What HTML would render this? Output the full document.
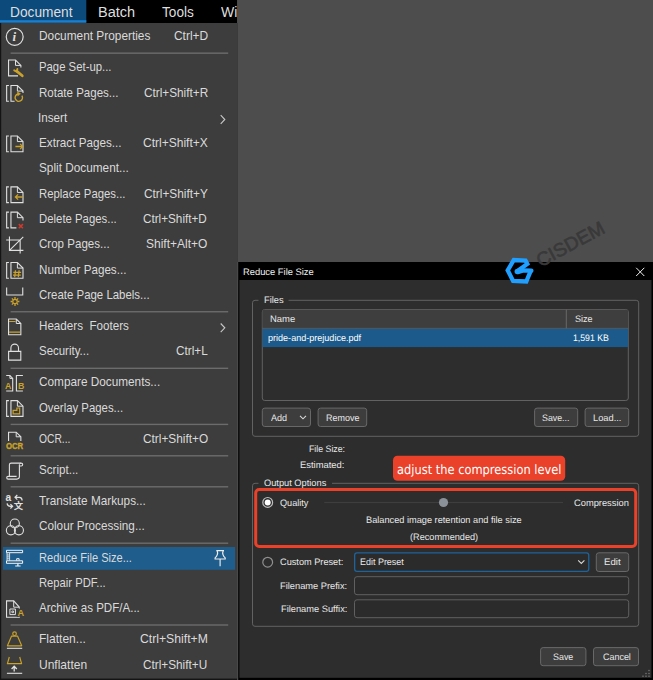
<!DOCTYPE html>
<html lang="en"><head><meta charset="utf-8"><title>Reduce File Size</title>
<style>
html,body{margin:0;padding:0}
body{width:653px;height:680px;overflow:hidden;position:relative;background:#4d4d4d;font-family:"Liberation Sans",sans-serif}
.b{position:absolute}
.t{position:absolute;white-space:pre;transform-origin:0 50%;display:block}
svg.ic{position:absolute;left:0;top:0}
</style></head><body>
<svg class="ic" width="653" height="680" viewBox="0 0 653 680">
<rect x="0.00" y="0.00" width="237.05" height="23.00" rx="0.00" fill="#000"/>
<rect x="0.00" y="0.00" width="86.30" height="22.60" rx="0.00" fill="#0c4a7b"/>
<rect x="0.00" y="20.20" width="86.30" height="2.50" rx="0.00" fill="#1a7fcf"/>
<rect x="0.00" y="23.00" width="237.30" height="657.00" rx="0.00" fill="#141414"/>
<rect x="1.20" y="23.00" width="236.10" height="655.60" rx="0.00" fill="#3d3d3d"/>
<rect x="237.30" y="262.00" width="0.90" height="418.00" rx="0.00" fill="#505050"/>
<rect x="10.60" y="52.45" width="217.60" height="1.40" rx="0.00" fill="#6c6c6c"/>
<rect x="10.60" y="311.05" width="217.60" height="1.40" rx="0.00" fill="#6c6c6c"/>
<rect x="10.60" y="367.60" width="217.60" height="1.40" rx="0.00" fill="#6c6c6c"/>
<rect x="10.60" y="423.70" width="217.60" height="1.40" rx="0.00" fill="#6c6c6c"/>
<rect x="10.60" y="455.10" width="217.60" height="1.40" rx="0.00" fill="#6c6c6c"/>
<rect x="10.60" y="486.10" width="217.60" height="1.40" rx="0.00" fill="#6c6c6c"/>
<rect x="10.60" y="542.50" width="217.60" height="1.40" rx="0.00" fill="#6c6c6c"/>
<rect x="10.60" y="624.30" width="217.60" height="1.40" rx="0.00" fill="#6c6c6c"/>
<rect x="3.00" y="547.00" width="232.10" height="22.80" rx="0.00" fill="#1f5d8c"/>
<rect x="238.20" y="262.00" width="414.80" height="418.00" rx="0.00" fill="#000"/>
<rect x="239.40" y="280.00" width="412.10" height="397.80" rx="0.00" fill="#2d2d2d"/>
<rect x="252.50" y="300.30" width="386.20" height="136.00" rx="2.50" fill="none" stroke="#626262" stroke-width="1"/>
<rect x="258.50" y="296.00" width="30.00" height="10.00" rx="0.00" fill="#2d2d2d"/>
<rect x="262.30" y="309.50" width="366.00" height="91.00" rx="2.50" fill="#2d2d2d" stroke="#626262" stroke-width="1"/>
<rect x="262.50" y="309.70" width="365.60" height="18.70" rx="1.50" fill="#3e3e3e"/>
<rect x="262.50" y="327.90" width="365.60" height="0.90" rx="0.00" fill="#606060"/>
<rect x="565.80" y="309.70" width="1.00" height="18.70" rx="0.00" fill="#686868"/>
<rect x="262.50" y="328.80" width="365.60" height="18.30" rx="0.00" fill="#1b5a8a"/>
<rect x="262.30" y="408.10" width="48.20" height="18.40" rx="2.50" fill="#3d3d3d" stroke="#686868" stroke-width="1"/>
<rect x="318.10" y="408.10" width="48.60" height="18.40" rx="2.50" fill="#3d3d3d" stroke="#686868" stroke-width="1"/>
<rect x="534.60" y="408.10" width="43.10" height="18.40" rx="2.50" fill="#3d3d3d" stroke="#686868" stroke-width="1"/>
<rect x="585.10" y="408.10" width="43.60" height="18.40" rx="2.50" fill="#3d3d3d" stroke="#686868" stroke-width="1"/>
<rect x="252.50" y="483.30" width="386.20" height="143.00" rx="2.50" fill="none" stroke="#626262" stroke-width="1"/>
<rect x="258.50" y="479.00" width="73.50" height="10.00" rx="0.00" fill="#2d2d2d"/>
<rect x="255.70" y="489.50" width="380.00" height="57.00" rx="3.50" fill="none" stroke="#e9412a" stroke-width="3"/>
<rect x="393.00" y="455.70" width="172.20" height="25.10" rx="4.50" fill="#e9412a"/>
<rect x="324.20" y="501.90" width="238.80" height="1.20" rx="0.00" fill="#3e3e3e"/>
<circle cx="443.50" cy="502.50" r="4.60" fill="#8b9199" stroke="none" stroke-width="1"/>
<circle cx="267.70" cy="502.40" r="4.90" fill="none" stroke="#bdbdbd" stroke-width="1.2"/>
<circle cx="267.70" cy="502.40" r="3.00" fill="#ffffff" stroke="none" stroke-width="1"/>
<circle cx="267.70" cy="562.20" r="4.90" fill="none" stroke="#909090" stroke-width="1.2"/>
<rect x="354.65" y="552.95" width="234.10" height="18.40" rx="2.35" fill="#2b2b2b" stroke="#1e639a" stroke-width="1.3"/>
<rect x="596.30" y="552.80" width="32.40" height="18.70" rx="2.50" fill="#3d3d3d" stroke="#686868" stroke-width="1"/>
<rect x="354.50" y="576.70" width="274.20" height="18.00" rx="2.50" fill="#2b2b2b" stroke="#606060" stroke-width="1"/>
<rect x="354.50" y="599.80" width="274.20" height="17.90" rx="2.50" fill="#2b2b2b" stroke="#606060" stroke-width="1"/>
<rect x="540.60" y="647.60" width="45.30" height="18.10" rx="2.50" fill="#3d3d3d" stroke="#686868" stroke-width="1"/>
<rect x="593.50" y="647.60" width="45.00" height="18.10" rx="2.50" fill="#3d3d3d" stroke="#686868" stroke-width="1"/>
</svg>
<svg class="ic" width="653" height="680" viewBox="0 0 653 680" fill="none">
<circle cx="14.7" cy="36.85" r="8.45" stroke="#e0e0e0" stroke-width="1.2" fill="none"/>
<text x="12.5" y="41.3" font-family="'Liberation Serif',serif" font-size="13" fill="#e0e0e0" font-style="italic" font-weight="bold" textLength="3.6" lengthAdjust="spacingAndGlyphs">i</text>
<path d="M18.0,75.9 H8.55 V60.05 H15.5 L20.9,65.4 V67.6" stroke="#e0e0e0" stroke-width="1.1" fill="none" />
<path d="M15.5,60.05 V65.4 H20.9" stroke="#e0e0e0" stroke-width="1" fill="none" />
<path d="M17.0,71.4 L22.3,75.8" stroke="#c9a12b" stroke-width="2.7" fill="none" stroke-linecap="round"/>
<path d="M14.2,70.3 L16.6,71.6 L17.4,68.9" stroke="#c9a12b" stroke-width="1.9" fill="none" stroke-linecap="round" stroke-linejoin="round"/>
<path d="M8.9,85.50 H6.65 V101.30 H8.9" stroke="#e0e0e0" stroke-width="1.1" fill="none" />
<path d="M14.60,101.30 H10.95 V85.50 H17.40 L23.00,91.10 V93.00" stroke="#e0e0e0" stroke-width="1.1" fill="none" />
<path d="M17.40,85.50 V91.10 H23.00" stroke="#e0e0e0" stroke-width="1" fill="none" />
<path d="M21.9,95.6 A3.7,3.7 0 1,1 18.0,94.0" stroke="#c9a12b" stroke-width="1.4" fill="none" />
<path d="M17.3,91.7 L20.6,93.8 L17.7,96.1 Z" stroke="#c9a12b" stroke-width="0.4" fill="#c9a12b" />
<path d="M8.9,135.95 H6.65 V151.75 H8.9" stroke="#e0e0e0" stroke-width="1.1" fill="none" />
<path d="M23.00,151.75 H10.95 V135.95 H17.40 L23.00,141.55 Z" stroke="#e0e0e0" stroke-width="1.1" fill="none" />
<path d="M17.40,135.95 V141.55 H23.00" stroke="#e0e0e0" stroke-width="1" fill="none" />
<path d="M15.4,146.5 H22.6 M20.1,143.9 L22.8,146.5 L20.1,149.1" stroke="#c9a12b" stroke-width="1.3" fill="none" />
<path d="M8.9,186.85 H6.65 V202.65 H8.9" stroke="#e0e0e0" stroke-width="1.1" fill="none" />
<path d="M23.00,202.65 H10.95 V186.85 H17.40 L23.00,192.45 Z" stroke="#e0e0e0" stroke-width="1.1" fill="none" />
<path d="M17.40,186.85 V192.45 H23.00" stroke="#e0e0e0" stroke-width="1" fill="none" />
<path d="M22.9,197 H15.6 M18.1,194.4 L15.4,197 L18.1,199.6" stroke="#c9a12b" stroke-width="1.3" fill="none" />
<path d="M8.9,212.10 H6.65 V227.90 H8.9" stroke="#e0e0e0" stroke-width="1.1" fill="none" />
<path d="M16.40,227.90 H10.95 V212.10 H17.40 L23.00,217.70 V220.40" stroke="#e0e0e0" stroke-width="1.1" fill="none" />
<path d="M17.40,212.10 V217.70 H23.00" stroke="#e0e0e0" stroke-width="1" fill="none" />
<path d="M18.8,224.1 L22.9,228.2 M22.9,224.1 L18.8,228.2" stroke="#cf3a2e" stroke-width="1.5" fill="none" />
<path d="M9.45,236.6 V250.4 H23.4 M6.2,240.05 H20.15 V253.4 M9.7,250.2 L23.3,236.8" stroke="#e0e0e0" stroke-width="1.1" fill="none" />
<path d="M8.9,262.50 H6.65 V278.30 H8.9" stroke="#e0e0e0" stroke-width="1.1" fill="none" />
<path d="M23.00,278.30 H10.95 V262.50 H17.40 L23.00,268.10 Z" stroke="#e0e0e0" stroke-width="1.1" fill="none" />
<path d="M17.40,262.50 V268.10 H23.00" stroke="#e0e0e0" stroke-width="1" fill="none" />
<path d="M15.5,270.2 L14.7,277.2 M19.1,270.2 L18.3,277.2 M13.3,272.4 H21.1 M13.0,275.1 H20.8" stroke="#c9a12b" stroke-width="1.25" fill="none" />
<path d="M6.65,287.4 V295.05 H22.75 V287.4" stroke="#e0e0e0" stroke-width="1.1" fill="none" />
<path d="M17.50,301.50 L19.40,301.50 M16.77,303.27 L18.11,304.61 M15.00,304.00 L15.00,305.90 M13.23,303.27 L11.89,304.61 M12.50,301.50 L10.60,301.50 M13.23,299.73 L11.89,298.39 M15.00,299.00 L15.00,297.10 M16.77,299.73 L18.11,298.39 " stroke="#c9a12b" stroke-width="1.3" fill="none" />
<circle cx="15" cy="301.5" r="2.2" stroke="#c9a12b" stroke-width="1.2" fill="none"/>
<path d="M8.55,319.05 H16.3 L20.85,323.5 V334.75 H8.55 Z" stroke="#e0e0e0" stroke-width="1.1" fill="none" />
<path d="M16.3,319.05 V323.5 H20.85" stroke="#e0e0e0" stroke-width="1" fill="none" />
<path d="M9.1,321.5 H15.6 M9.1,332.1 H20.3" stroke="#c9a12b" stroke-width="1.2" fill="none" />
<path d="M8.6,351.4 H20.8 V360.1 H8.6 Z" stroke="#e0e0e0" stroke-width="1.1" fill="none" />
<path d="M10.9,351.4 V347.9 A3.8,3.8 0 0,1 18.5,347.9 V351.4" stroke="#e0e0e0" stroke-width="1.1" fill="none" />
<path d="M6.2,375.5 H9.9 L12.7,378.4 V391.0 H6.2" stroke="#e0e0e0" stroke-width="1.1" fill="none" />
<path d="M9.9,375.5 V378.4 H12.7" stroke="#e0e0e0" stroke-width="1" fill="none" />
<path d="M22.9,375.5 H16.4 V391.0 H22.9" stroke="#e0e0e0" stroke-width="1.1" fill="none" />
<rect x="4.6" y="381.6" width="7.2" height="7.4" fill="#3d3d3d"/>
<text x="5.1" y="388.6" font-family="'Liberation Sans',sans-serif" font-size="8.8" fill="#c9a12b" font-weight="bold">A</text>
<text x="17.9" y="388.6" font-family="'Liberation Sans',sans-serif" font-size="8.8" fill="#c9a12b" font-weight="bold">B</text>
<path d="M8.9,400.60 H6.65 V416.40 H8.9" stroke="#e0e0e0" stroke-width="1.1" fill="none" />
<path d="M23.00,416.40 H10.95 V400.60 H17.40 L23.00,406.20 Z" stroke="#e0e0e0" stroke-width="1.1" fill="none" />
<path d="M17.40,400.60 V406.20 H23.00" stroke="#e0e0e0" stroke-width="1" fill="none" />
<path d="M13.1,413.9 V410.4 H16.9 V408.0 H19.7 V413.9 Z" stroke="#c9a12b" stroke-width="1.2" fill="none" />
<path d="M8.55,441 V432.2 H16.2 L20.85,436.8 V441" stroke="#e0e0e0" stroke-width="1.1" fill="none" />
<path d="M16.2,432.2 V436.8 H20.85" stroke="#e0e0e0" stroke-width="1" fill="none" />
<text x="5.9" y="448.5" font-family="'Liberation Sans',sans-serif" font-size="8.4" fill="#c9a12b" font-weight="bold" textLength="17.2" lengthAdjust="spacingAndGlyphs" stroke="#c9a12b" stroke-width="0.35">OCR</text>
<path d="M9.4,476.4 V464.8 Q9.4,463.1 11.2,463.1 H21 Q22.7,463.1 22.7,464.6 Q22.7,466.0 21.2,466.0 H19.4 V476.6 Q19.4,479.1 16.8,479.1 H8.2 Q6.7,479.1 6.7,477.8 Q6.7,476.4 8.2,476.4 H16.6" stroke="#e0e0e0" stroke-width="1.1" fill="none" />
<path d="M19.4,466.0 V464.6 Q19.5,463.3 21,463.1" stroke="#e0e0e0" stroke-width="1" fill="none" />
<text x="5.6" y="500.6" font-family="'Liberation Sans',sans-serif" font-size="10.2" fill="#e0e0e0" font-weight="bold">a</text>
<text x="13.7" y="509.4" font-family="'Liberation Sans','Noto Sans CJK SC','Noto Sans CJK JP',sans-serif" font-size="9.4" fill="#e0e0e0" font-weight="bold">文</text>
<path d="M15.1,497.3 H19.4 Q22.1,497.6 22.1,500.4 M17.3,495.0 L15.0,497.3 L17.3,499.6" stroke="#e0e0e0" stroke-width="1.2" fill="none" />
<path d="M7.1,503.4 Q7.4,506.3 10.4,506.3 H12.4 M10.4,504.2 L12.6,506.3 L10.4,508.5" stroke="#e0e0e0" stroke-width="1.2" fill="none" />
<circle cx="14.8" cy="523.5" r="4.55" stroke="#e0e0e0" stroke-width="1.1" fill="none"/>
<circle cx="10.9" cy="530.3" r="4.55" stroke="#e0e0e0" stroke-width="1.1" fill="none"/>
<circle cx="18.9" cy="530.3" r="4.55" stroke="#e0e0e0" stroke-width="1.1" fill="none"/>
<path d="M6.5,550.3 H22.6 V552.7 H6.5 Z" stroke="#f4f4f4" stroke-width="1" fill="none" />
<path d="M7.0,553 V560.6 M9.6,553 V560.6 M7.0,555.0 H9.6 M7.0,556.9 H9.6 M7.0,558.8 H9.6" stroke="#f4f4f4" stroke-width="0.8" fill="none" />
<path d="M6.5,560.8 H22.6 V563.3 H6.5 Z" stroke="#f4f4f4" stroke-width="1" fill="none" />
<path d="M16.7,560.6 V558.7 H19.1 V560.6" stroke="#f4f4f4" stroke-width="1" fill="none" />
<path d="M17.9,563.6 V565.8 M15.2,566.0 H20.6" stroke="#f4f4f4" stroke-width="1.2" fill="none" />
<path d="M216.3,550.6 H224.0 M217.1,550.8 Q218.7,554.6 215.1,557.9 V559.0 H225.2 V557.9 Q221.6,554.6 223.2,550.8 M220.1,559.2 V566.3" stroke="#eeeeee" stroke-width="1.15" fill="none" />
<path d="M19.3,607.2 V617.3 H6.55 V600.85 H13.7 L19.3,607.2" stroke="#e0e0e0" stroke-width="1.1" fill="none" />
<path d="M13.7,600.85 V607.2 H19.3" stroke="#e0e0e0" stroke-width="1" fill="none" />
<path d="M9.9,609.0 H15.4 V614.6 H9.9 Z" stroke="#e0e0e0" stroke-width="1" fill="none" />
<path d="M11.9,611.0 H13.5 V612.7 H11.9 Z" stroke="#e0e0e0" stroke-width="0.9" fill="none" />
<rect x="16.8" y="608.6" width="8" height="8.2" fill="#3d3d3d"/>
<text x="17.6" y="615.8" font-family="'Liberation Sans',sans-serif" font-size="9.2" fill="#c9a12b" font-weight="bold">A</text>
<path d="M11.6,636.1 H17.5 L21.7,645.8 H7.4 Z" stroke="#c9a12b" stroke-width="1.15" fill="none" stroke-linejoin="round"/>
<circle cx="14.55" cy="633.7" r="1.8" stroke="#c9a12b" stroke-width="1.2" fill="none"/>
<path d="M6.9,648.3 H22.2" stroke="#e0e0e0" stroke-width="1.1" fill="none" />
<path d="M9.3,657.0 L7.4,663.6 H21.6 L19.7,657.0" stroke="#c9a12b" stroke-width="1.15" fill="none" stroke-linejoin="round"/>
<path d="M14.2,671.6 V666.5 M11.6,669.0 L14.2,666.3 L16.8,669.0" stroke="#e0e0e0" stroke-width="1.3" fill="none" />
<path d="M6.9,673.3 H22.2" stroke="#e0e0e0" stroke-width="1.1" fill="none" />
<path d="M220.7,115.20 L224.8,119.50 L220.7,123.80" stroke="#c8c8c8" stroke-width="1.1" fill="none" />
<path d="M220.7,323.50 L224.8,327.80 L220.7,332.10" stroke="#c8c8c8" stroke-width="1.1" fill="none" />
<path d="M636.2,267.8 L644.3,276.0 M644.3,267.8 L636.2,276.0" stroke="#f0f0f0" stroke-width="1" fill="none" />
<path d="M300.0,415.8 L303,418.8 L306.0,415.8" stroke="#d8d8d8" stroke-width="1.1" fill="none" />
<path d="M578.2,560.3 L581.3,563.4 L584.4,560.3" stroke="#d8d8d8" stroke-width="1.1" fill="none" />
<rect x="648.35" y="669.85" width="1.3" height="1.3" fill="#7a7a7a"/>
<rect x="645.35" y="672.85" width="1.3" height="1.3" fill="#7a7a7a"/>
<rect x="648.35" y="672.85" width="1.3" height="1.3" fill="#7a7a7a"/>
<rect x="642.35" y="675.55" width="1.3" height="1.3" fill="#7a7a7a"/>
<rect x="645.35" y="675.55" width="1.3" height="1.3" fill="#7a7a7a"/>
<rect x="648.35" y="675.55" width="1.3" height="1.3" fill="#7a7a7a"/>
<path d="M530.8,270.7 L526.3,281.5 L513.1,280.9 L507.7,270.3 L513.8,260.0 L525.5,260.7 L527.3,263.9 L518.2,270.6" stroke="#209fff" stroke-width="4.3" stroke-linejoin="miter" stroke-miterlimit="6" fill="none"/>
<path d="M531.4,270.6 L523.3,270.4 L518.4,272.0" stroke="#209fff" stroke-width="4.3" stroke-linejoin="round" stroke-linecap="round" fill="none"/>
<circle cx="517.3" cy="271.4" r="2.75" fill="#209fff"/>
<text transform="translate(540.7,267.6) rotate(-28.5)" font-family="'Liberation Sans',sans-serif" font-size="19" textLength="74.5" lengthAdjust="spacingAndGlyphs" fill="#393939" stroke="#393939" stroke-width="0.6" stroke-linejoin="round">CISDEM</text>

</svg>
<span class="t" id="t0" style="left:9.87px;top:4.75px;font-size:14px;line-height:14px;color:#dedede;transform:scaleX(0.9798);">Document</span>
<span class="t" id="t1" style="left:97.56px;top:4.75px;font-size:14px;line-height:14px;color:#dedede;transform:scaleX(1.0369);">Batch</span>
<span class="t" id="t2" style="left:161.69px;top:4.75px;font-size:14px;line-height:14px;color:#dedede;transform:scaleX(0.9728);">Tools</span>
<span class="t" id="t3" style="left:220.95px;top:4.75px;font-size:14px;line-height:14px;color:#dedede;transform:scaleX(1.0000);width:16.3px;overflow:hidden;">Window</span>
<span class="t" id="t4" style="left:38.53px;top:29.00px;font-size:13px;line-height:13px;color:#dadada;transform:scaleX(0.9122);">Document Properties</span>
<span class="t" id="t5" style="left:174.09px;top:29.00px;font-size:13px;line-height:13px;color:#dadada;transform:scaleX(0.9187);">Ctrl+D</span>
<span class="t" id="t6" style="left:38.57px;top:60.25px;font-size:13px;line-height:13px;color:#dadada;transform:scaleX(0.8718);">Page Set-up...</span>
<span class="t" id="t7" style="left:38.55px;top:85.50px;font-size:13px;line-height:13px;color:#dadada;transform:scaleX(0.8870);">Rotate Pages...</span>
<span class="t" id="t8" style="left:144.10px;top:85.50px;font-size:13px;line-height:13px;color:#dadada;transform:scaleX(0.9058);">Ctrl+Shift+R</span>
<span class="t" id="t9" style="left:38.42px;top:110.75px;font-size:13px;line-height:13px;color:#dadada;transform:scaleX(0.8968);">Insert</span>
<span class="t" id="t10" style="left:38.54px;top:136.00px;font-size:13px;line-height:13px;color:#dadada;transform:scaleX(0.8993);">Extract Pages...</span>
<span class="t" id="t11" style="left:143.09px;top:136.00px;font-size:13px;line-height:13px;color:#dadada;transform:scaleX(0.9254);">Ctrl+Shift+X</span>
<span class="t" id="t12" style="left:38.96px;top:161.25px;font-size:13px;line-height:13px;color:#dadada;transform:scaleX(0.9077);">Split Document...</span>
<span class="t" id="t13" style="left:38.57px;top:186.75px;font-size:13px;line-height:13px;color:#dadada;transform:scaleX(0.8733);">Replace Pages...</span>
<span class="t" id="t14" style="left:144.10px;top:186.75px;font-size:13px;line-height:13px;color:#dadada;transform:scaleX(0.9111);">Ctrl+Shift+Y</span>
<span class="t" id="t15" style="left:38.57px;top:212.00px;font-size:13px;line-height:13px;color:#dadada;transform:scaleX(0.8743);">Delete Pages...</span>
<span class="t" id="t16" style="left:143.10px;top:212.00px;font-size:13px;line-height:13px;color:#dadada;transform:scaleX(0.9009);">Ctrl+Shift+D</span>
<span class="t" id="t17" style="left:38.91px;top:237.25px;font-size:13px;line-height:13px;color:#dadada;transform:scaleX(0.8886);">Crop Pages...</span>
<span class="t" id="t18" style="left:146.21px;top:237.25px;font-size:13px;line-height:13px;color:#dadada;transform:scaleX(0.9231);">Shift+Alt+O</span>
<span class="t" id="t19" style="left:38.53px;top:262.50px;font-size:13px;line-height:13px;color:#dadada;transform:scaleX(0.8960);">Number Pages...</span>
<span class="t" id="t20" style="left:38.92px;top:288.00px;font-size:13px;line-height:13px;color:#dadada;transform:scaleX(0.8797);">Create Page Labels...</span>
<span class="t" id="t21" style="left:38.55px;top:319.00px;font-size:13px;line-height:13px;color:#dadada;transform:scaleX(0.8948);">Headers  Footers</span>
<span class="t" id="t22" style="left:38.98px;top:344.25px;font-size:13px;line-height:13px;color:#dadada;transform:scaleX(0.8808);">Security...</span>
<span class="t" id="t23" style="left:175.65px;top:344.25px;font-size:13px;line-height:13px;color:#dadada;transform:scaleX(0.9056);">Ctrl+L</span>
<span class="t" id="t24" style="left:38.90px;top:375.25px;font-size:13px;line-height:13px;color:#dadada;transform:scaleX(0.9065);">Compare Documents...</span>
<span class="t" id="t25" style="left:38.96px;top:400.50px;font-size:13px;line-height:13px;color:#dadada;transform:scaleX(0.8748);">Overlay Pages...</span>
<span class="t" id="t26" style="left:39.01px;top:432.00px;font-size:13px;line-height:13px;color:#dadada;transform:scaleX(0.7909);">OCR...</span>
<span class="t" id="t27" style="left:143.10px;top:432.00px;font-size:13px;line-height:13px;color:#dadada;transform:scaleX(0.9110);">Ctrl+Shift+O</span>
<span class="t" id="t28" style="left:38.97px;top:463.00px;font-size:13px;line-height:13px;color:#dadada;transform:scaleX(0.8924);">Script...</span>
<span class="t" id="t29" style="left:39.24px;top:494.00px;font-size:13px;line-height:13px;color:#dadada;transform:scaleX(0.9053);">Translate Markups...</span>
<span class="t" id="t30" style="left:38.90px;top:519.00px;font-size:13px;line-height:13px;color:#dadada;transform:scaleX(0.9027);">Colour Processing...</span>
<span class="t" id="t31" style="left:38.59px;top:550.50px;font-size:13px;line-height:13px;color:#dadada;transform:scaleX(0.8516);">Reduce File Size...</span>
<span class="t" id="t32" style="left:38.58px;top:575.75px;font-size:13px;line-height:13px;color:#dadada;transform:scaleX(0.8627);">Repair PDF...</span>
<span class="t" id="t33" style="left:39.48px;top:601.00px;font-size:13px;line-height:13px;color:#dadada;transform:scaleX(0.8890);">Archive as PDF/A...</span>
<span class="t" id="t34" style="left:38.51px;top:632.00px;font-size:13px;line-height:13px;color:#dadada;transform:scaleX(0.9260);">Flatten...</span>
<span class="t" id="t35" style="left:140.13px;top:632.00px;font-size:13px;line-height:13px;color:#dadada;transform:scaleX(0.9394);">Ctrl+Shift+M</span>
<span class="t" id="t36" style="left:38.56px;top:657.50px;font-size:13px;line-height:13px;color:#dadada;transform:scaleX(0.9240);">Unflatten</span>
<span class="t" id="t37" style="left:143.09px;top:657.50px;font-size:13px;line-height:13px;color:#dadada;transform:scaleX(0.9058);">Ctrl+Shift+U</span>
<span class="t" id="t38" style="left:242.93px;top:266.84px;font-size:9.4px;line-height:9.4px;color:#f2f2f2;transform:scaleX(0.9980);text-rendering:geometricPrecision;">Reduce File Size</span>
<span class="t" id="t39" style="left:263.74px;top:295.04px;font-size:9.4px;line-height:9.4px;color:#e8e8e8;transform:scaleX(0.9900);text-rendering:geometricPrecision;">Files</span>
<span class="t" id="t40" style="left:270.22px;top:314.44px;font-size:9.4px;line-height:9.4px;color:#e8e8e8;transform:scaleX(1.0073);text-rendering:geometricPrecision;">Name</span>
<span class="t" id="t41" style="left:574.84px;top:314.44px;font-size:9.4px;line-height:9.4px;color:#e8e8e8;transform:scaleX(0.9623);text-rendering:geometricPrecision;">Size</span>
<span class="t" id="t42" style="left:267.67px;top:333.14px;font-size:9.4px;line-height:9.4px;color:#ffffff;transform:scaleX(0.9653);text-rendering:geometricPrecision;">pride-and-prejudice.pdf</span>
<span class="t" id="t43" style="left:573.08px;top:333.14px;font-size:9.4px;line-height:9.4px;color:#ffffff;transform:scaleX(0.9300);text-rendering:geometricPrecision;">1,591 KB</span>
<span class="t" id="t44" style="left:270.98px;top:412.54px;font-size:9.4px;line-height:9.4px;color:#e8e8e8;transform:scaleX(0.9649);text-rendering:geometricPrecision;">Add</span>
<span class="t" id="t45" style="left:325.76px;top:412.54px;font-size:9.4px;line-height:9.4px;color:#e8e8e8;transform:scaleX(0.9560);text-rendering:geometricPrecision;">Remove</span>
<span class="t" id="t46" style="left:541.90px;top:412.54px;font-size:9.4px;line-height:9.4px;color:#e8e8e8;transform:scaleX(0.9408);text-rendering:geometricPrecision;">Save...</span>
<span class="t" id="t47" style="left:592.74px;top:412.54px;font-size:9.4px;line-height:9.4px;color:#e8e8e8;transform:scaleX(0.9892);text-rendering:geometricPrecision;">Load...</span>
<span class="t" id="t48" style="left:308.53px;top:443.54px;font-size:9.4px;line-height:9.4px;color:#e8e8e8;transform:scaleX(0.9341);text-rendering:geometricPrecision;">File Size:</span>
<span class="t" id="t49" style="left:300.23px;top:459.79px;font-size:9.4px;line-height:9.4px;color:#e8e8e8;transform:scaleX(1.0019);text-rendering:geometricPrecision;">Estimated:</span>
<span class="t" id="t50" style="left:264.06px;top:478.34px;font-size:9.4px;line-height:9.4px;color:#e8e8e8;transform:scaleX(0.9875);text-rendering:geometricPrecision;">Output Options</span>
<span class="t" id="t51" style="left:280.07px;top:497.79px;font-size:9.4px;line-height:9.4px;color:#e8e8e8;transform:scaleX(0.9748);text-rendering:geometricPrecision;">Quality</span>
<span class="t" id="t52" style="left:574.03px;top:497.79px;font-size:9.4px;line-height:9.4px;color:#e8e8e8;transform:scaleX(0.9927);text-rendering:geometricPrecision;">Compression</span>
<span class="t" id="t53" style="left:365.99px;top:514.54px;font-size:9.4px;line-height:9.4px;color:#e8e8e8;transform:scaleX(0.9825);text-rendering:geometricPrecision;">Balanced image retention and file size</span>
<span class="t" id="t54" style="left:410.13px;top:532.04px;font-size:9.4px;line-height:9.4px;color:#e8e8e8;transform:scaleX(0.9758);text-rendering:geometricPrecision;">(Recommended)</span>
<span class="t" id="t55" style="left:280.28px;top:557.24px;font-size:9.4px;line-height:9.4px;color:#e8e8e8;transform:scaleX(0.9799);text-rendering:geometricPrecision;">Custom Preset:</span>
<span class="t" id="t56" style="left:360.26px;top:557.24px;font-size:9.4px;line-height:9.4px;color:#e8e8e8;transform:scaleX(0.9551);text-rendering:geometricPrecision;">Edit Preset</span>
<span class="t" id="t57" style="left:603.96px;top:557.24px;font-size:9.4px;line-height:9.4px;color:#e8e8e8;transform:scaleX(1.0283);text-rendering:geometricPrecision;">Edit</span>
<span class="t" id="t58" style="left:280.49px;top:580.79px;font-size:9.4px;line-height:9.4px;color:#e8e8e8;transform:scaleX(0.9908);text-rendering:geometricPrecision;">Filename Prefix:</span>
<span class="t" id="t59" style="left:281.24px;top:604.04px;font-size:9.4px;line-height:9.4px;color:#e8e8e8;transform:scaleX(0.9898);text-rendering:geometricPrecision;">Filename Suffix:</span>
<span class="t" id="t60" style="left:553.34px;top:652.04px;font-size:9.4px;line-height:9.4px;color:#e8e8e8;transform:scaleX(0.9498);text-rendering:geometricPrecision;">Save</span>
<span class="t" id="t61" style="left:602.54px;top:652.04px;font-size:9.4px;line-height:9.4px;color:#e8e8e8;transform:scaleX(0.9544);text-rendering:geometricPrecision;">Cancel</span>
<span class="t" id="t62" style="left:397.31px;top:463.83px;font-size:13px;line-height:13px;color:#ffffff;transform:scaleX(0.8797);font-family:'DejaVu Sans',sans-serif;text-rendering:geometricPrecision;">adjust the compression level</span>
</body></html>
